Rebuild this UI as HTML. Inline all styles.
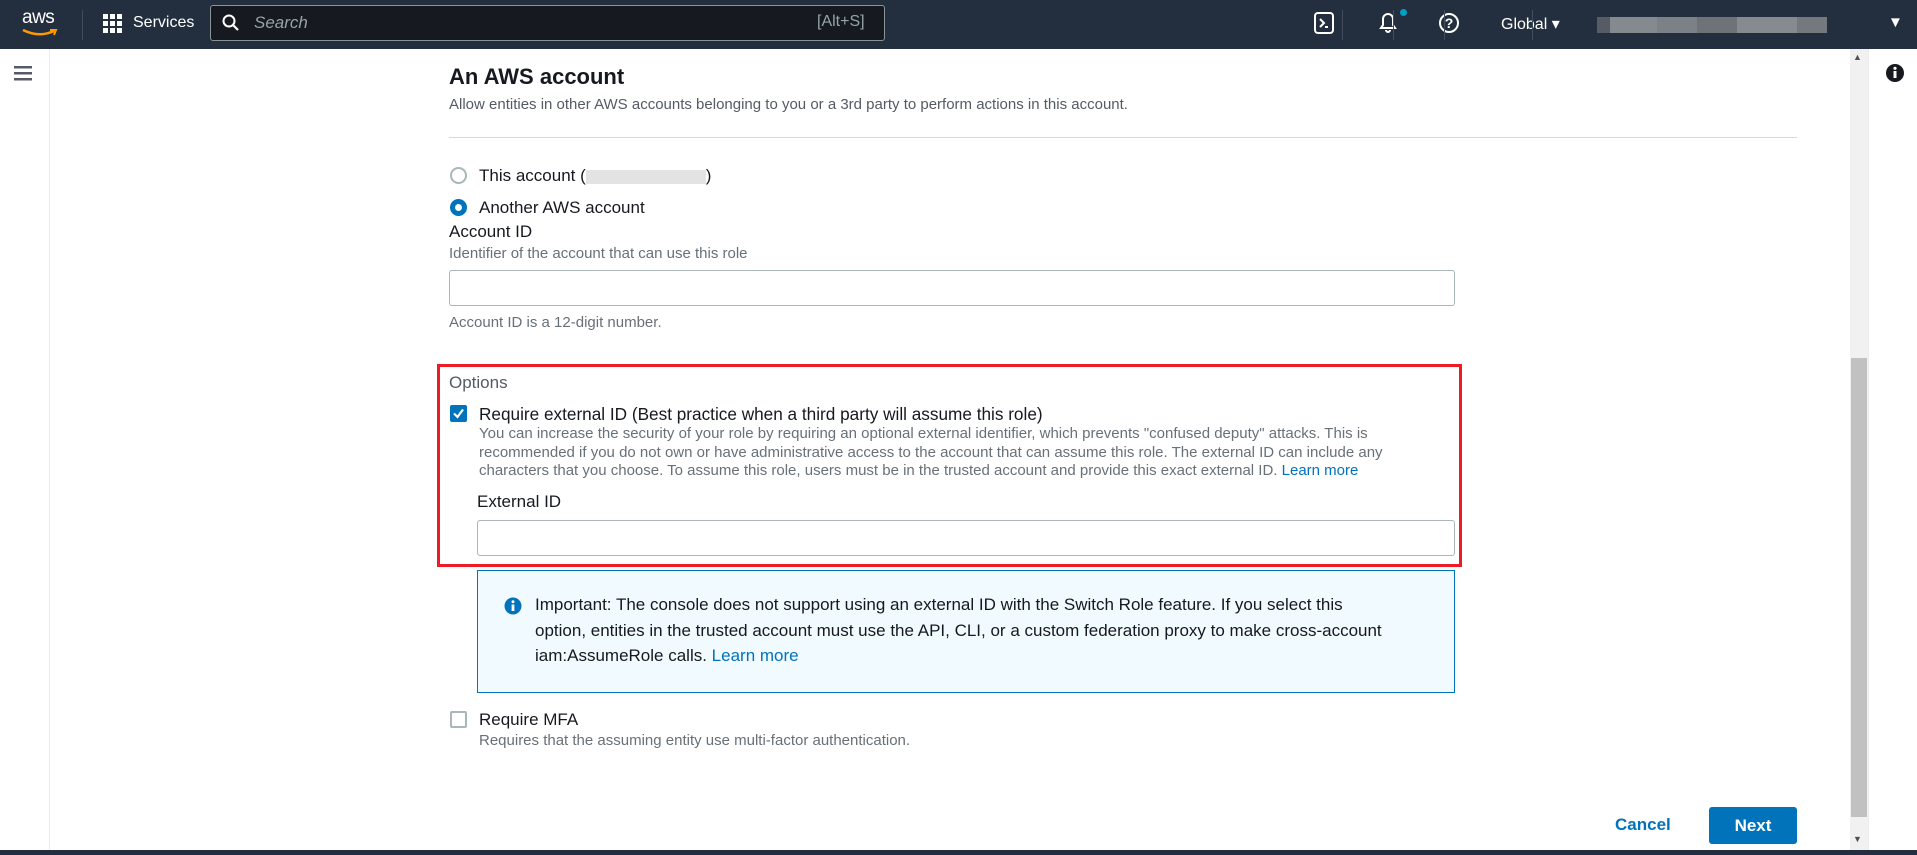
<!DOCTYPE html>
<html><head><meta charset="utf-8"><style>
*{box-sizing:border-box;margin:0;padding:0}
body{width:1917px;height:855px;overflow:hidden;background:#fff;font-family:"Liberation Sans",Arial,sans-serif;color:#16191f;position:relative}
.a{position:absolute}
.top{left:0;top:0;width:1917px;height:49px;background:#232f3e}
.sep{width:1px;height:30px;background:#414d5c;top:10px}
.t{white-space:nowrap}
.help{color:#687078;font-size:15px}
.inp{border:1px solid #aab7b8;border-radius:3px;background:#fff}
</style></head><body>
<div class="a top"></div>
<div class="a t" style="left:22px;top:7px;color:#fff;font-size:19px;letter-spacing:-0.5px">aws</div>
<svg class="a" style="left:21px;top:28px" width="38" height="10"><path d="M2 2 Q18 10 33 3" stroke="#ff9900" stroke-width="2.5" fill="none"/><path d="M29 2 L35 2 L33 7" stroke="#ff9900" stroke-width="2" fill="none"/></svg>
<div class="a sep" style="left:82px"></div>
<svg class="a" style="left:103px;top:14px" width="20" height="20" fill="#fff"><rect x="0" y="0" width="5" height="5"/><rect x="7" y="0" width="5" height="5"/><rect x="14" y="0" width="5" height="5"/><rect x="0" y="7" width="5" height="5"/><rect x="7" y="7" width="5" height="5"/><rect x="14" y="7" width="5" height="5"/><rect x="0" y="14" width="5" height="5"/><rect x="7" y="14" width="5" height="5"/><rect x="14" y="14" width="5" height="5"/></svg>
<div class="a t" style="left:133px;top:14px;color:#fff;font-size:16px">Services</div>
<div class="a" style="left:210px;top:5px;width:675px;height:36px;background:#16191f;border:1px solid #879596;border-radius:3px"></div>
<svg class="a" style="left:222px;top:14px" width="18" height="18"><circle cx="7" cy="7" r="5.5" stroke="#fff" stroke-width="2" fill="none"/><path d="M11 11 L16 16" stroke="#fff" stroke-width="2.2"/></svg>
<div class="a t" style="left:254px;top:13px;color:#95a5a6;font-size:17px;font-style:italic">Search</div>
<div class="a t" style="left:817px;top:13px;color:#95a5a6;font-size:16px">[Alt+S]</div>
<svg class="a" style="left:1313px;top:11px" width="22" height="24"><rect x="2" y="2" width="18" height="20" rx="3" stroke="#fff" stroke-width="2" fill="none"/><path d="M7 8 L11 12 L7 16 M12 16 L15 16" stroke="#fff" stroke-width="2" fill="none"/></svg>
<div class="a sep" style="left:1342px"></div>
<svg class="a" style="left:1377px;top:10px" width="22" height="26"><path d="M4 18 L18 18 L16 15 L16 9 A5 5 0 0 0 6 9 L6 15 Z M9 20 A2 2 0 0 0 13 20" stroke="#fff" stroke-width="2" fill="none"/></svg>
<div class="a" style="left:1400px;top:9px;width:7px;height:7px;border-radius:50%;background:#00a1c9"></div>
<div class="a sep" style="left:1393px"></div>
<svg class="a" style="left:1438px;top:12px" width="22" height="22"><circle cx="11" cy="11" r="9" stroke="#fff" stroke-width="2" fill="none"/><text x="11" y="16" fill="#fff" font-size="14" font-weight="bold" text-anchor="middle" font-family="Liberation Sans">?</text></svg>
<div class="a sep" style="left:1444px"></div>
<div class="a t" style="left:1501px;top:14px;color:#fff;font-size:16px">Global ▾</div>
<div class="a sep" style="left:1532px"></div>
<div class="a" style="left:1597px;top:17px;width:230px;height:16px;background:linear-gradient(90deg,#555c66 0 13px,#858a8f 13px 60px,#7c8187 60px 100px,#6f7378 100px 140px,#878b90 140px 200px,#75797d 200px)"></div>
<div class="a t" style="left:1888px;top:14px;color:#fff;font-size:15px">▼</div>

<div class="a" style="left:49px;top:49px;width:1px;height:801px;background:#eaeded"></div>
<svg class="a" style="left:14px;top:66px" width="20" height="16" fill="#545b64"><rect y="0" width="18" height="2.5"/><rect y="6" width="18" height="2.5"/><rect y="12" width="18" height="2.5"/></svg>
<div class="a" style="left:1850px;top:49px;width:18px;height:801px;background:#f1f1f1"></div>
<div class="a" style="left:1851px;top:358px;width:16px;height:459px;background:#c1c1c1"></div>
<div class="a t" style="left:1853px;top:52px;color:#505050;font-size:9px">▲</div>
<div class="a t" style="left:1853px;top:834px;color:#505050;font-size:9px">▼</div>
<div class="a" style="left:1868px;top:49px;width:1px;height:801px;background:#eaeded"></div>
<svg class="a" style="left:1885px;top:63px" width="20" height="20"><circle cx="10" cy="10" r="9" fill="#16191f"/><rect x="8.5" y="8" width="3" height="7" fill="#fff"/><circle cx="10" cy="5.3" r="1.6" fill="#fff"/></svg>
<div class="a" style="left:0;top:850px;width:1917px;height:5px;background:#232f3e"></div>

<div class="a t" style="left:449px;top:64px;font-size:22px;font-weight:bold">An AWS account</div>
<div class="a t help" style="left:449px;top:96px;color:#545b64">Allow entities in other AWS accounts belonging to you or a 3rd party to perform actions in this account.</div>
<div class="a" style="left:449px;top:137px;width:1348px;height:1px;background:#d5dbdb"></div>

<div class="a" style="left:450px;top:167px;width:17px;height:17px;border:2px solid #aab7b8;border-radius:50%"></div>
<div class="a t" style="left:479px;top:166px;font-size:17px">This account (<span style="display:inline-block;width:120px;height:14px;background:#e3e3e3;vertical-align:middle"></span>)</div>
<div class="a" style="left:450px;top:199px;width:17px;height:17px;border:5px solid #0073bb;border-radius:50%"></div>
<div class="a t" style="left:479px;top:198px;font-size:17px">Another AWS account</div>
<div class="a t" style="left:449px;top:222px;font-size:17px">Account ID</div>
<div class="a t help" style="left:449px;top:245px">Identifier of the account that can use this role</div>
<div class="a inp" style="left:449px;top:270px;width:1006px;height:36px"></div>
<div class="a t help" style="left:449px;top:314px">Account ID is a 12-digit number.</div>

<div class="a" style="left:437px;top:364px;width:1025px;height:203px;border:3px solid #ed1c24"></div>
<div class="a t" style="left:449px;top:373px;font-size:17px;color:#545b64">Options</div>
<div class="a" style="left:450px;top:405px;width:17px;height:17px;background:#0073bb;border-radius:2px"></div>
<svg class="a" style="left:450px;top:405px" width="17" height="17"><path d="M4 8.5 L7.5 12 L13 4.5" stroke="#fff" stroke-width="2.2" fill="none"/></svg>
<div class="a t" style="left:479px;top:404px;font-size:17.2px">Require external ID (Best practice when a third party will assume this role)</div>
<div class="a help" style="left:479px;top:425px;width:920px;line-height:18.5px">You can increase the security of your role by requiring an optional external identifier, which prevents "confused deputy" attacks. This is recommended if you do not own or have administrative access to the account that can assume this role. The external ID can include any characters that you choose. To assume this role, users must be in the trusted account and provide this exact external ID. <span style="color:#0073bb">Learn more</span></div>
<div class="a t" style="left:477px;top:492px;font-size:17px">External ID</div>
<div class="a inp" style="left:477px;top:520px;width:978px;height:36px"></div>

<div class="a" style="left:477px;top:570px;width:978px;height:123px;background:#f1faff;border:1px solid #0073bb"></div>
<svg class="a" style="left:504px;top:597px" width="18" height="18"><circle cx="9" cy="9" r="8.5" fill="#0073bb"/><rect x="7.6" y="7.5" width="2.8" height="6.5" fill="#fff"/><circle cx="9" cy="4.8" r="1.5" fill="#fff"/></svg>
<div class="a t" style="left:535px;top:592px;font-size:17px;line-height:25.5px">Important: The console does not support using an external ID with the Switch Role feature. If you select this<br>option, entities in the trusted account must use the API, CLI, or a custom federation proxy to make cross-account<br>iam:AssumeRole calls. <span style="color:#0073bb">Learn more</span></div>

<div class="a" style="left:450px;top:711px;width:17px;height:17px;border:2px solid #aab7b8;border-radius:2px"></div>
<div class="a t" style="left:479px;top:710px;font-size:17px">Require MFA</div>
<div class="a t help" style="left:479px;top:732px">Requires that the assuming entity use multi-factor authentication.</div>

<div class="a t" style="left:1615px;top:815px;font-size:17px;font-weight:bold;color:#0073bb">Cancel</div>
<div class="a" style="left:1709px;top:807px;width:88px;height:37px;background:#0073bb;border-radius:3px;color:#fff;font-weight:bold;font-size:17px;text-align:center;line-height:37px">Next</div>
</body></html>
